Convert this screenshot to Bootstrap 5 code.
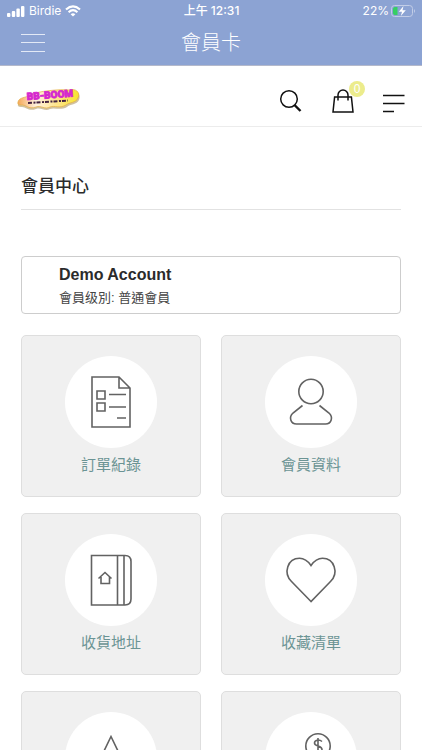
<!DOCTYPE html>
<html lang="zh-Hant">
<head>
<meta charset="utf-8">
<meta name="viewport" content="width=device-width, initial-scale=1">
<title>會員卡</title>
<link href="https://cdn.jsdelivr.net/npm/bootstrap@5.3.0/dist/css/bootstrap.min.css" rel="stylesheet">
<style>
body { font-family: "Liberation Sans", "Noto Sans CJK TC", sans-serif; color: #2b2b2b; }
.app-top { background: #8ca3d3; border-bottom: 1px solid #b4b9cb; }
.status-bar { font: 12px/22px Inter, "Noto Sans CJK TC", sans-serif; padding: 0 6px 0 7px; }
.status-time { font-weight: 500; }
.status-battery { gap: 2px; }
.app-title { font-size: 20px; line-height: 43px; font-weight: 300; }
.title-bar { height: 43px; padding: 0 20px; }
.side { flex: 1 1 0; }
.plain-btn { border: 0; background: none; padding: 0; line-height: 0; color: inherit; }
.scroll-area { scrollbar-width: none; }
.scroll-area::-webkit-scrollbar { display: none; }
.shop-bar { height: 61px; border-bottom: 1px solid #ececec; padding: 10px 17px 0 16px; }
.shop-tools { gap: 29px; color: #111; }
.bag-count { top: -7px; right: -11px; width: 16px; height: 16px; font-size: 12px; line-height: 16px; background: #ecec8c; color: #fff; }
.member { padding: 0 21px; }
.member-title { font-size: 17px; line-height: 24px; font-weight: 500; padding: 46px 0 12px; border-bottom: 1px solid #e2e2e2; margin-bottom: 46px; font-family: "Noto Sans CJK TC", sans-serif; }
.profile { border: 1px solid #cdcdcd; border-radius: 4px; padding: 6px 37px 5px; margin-bottom: 21px; }
.profile-name { font-size: 16px; line-height: 24px; }
.profile-level { font-size: 13px; line-height: 21px; color: #444; }
.tiles { --bs-gutter-x: 20px; --bs-gutter-y: 16px; }
.tile { background: #f0f0f0; border: 1px solid #dedede; border-radius: 5px; padding: 20px 0 14px; color: #6b9494; font-size: 15px; line-height: 34px; }
.tile-icon { width: 92px; height: 92px; }
.tile-icon svg { display: block; }
</style>
</head>
<body class="bg-white">
<div class="d-flex flex-column vh-100">
  <header class="app-top text-white flex-shrink-0">
    <div class="status-bar d-flex align-items-center">
      <div class="side d-flex align-items-center gap-1">
        <svg width="18" height="11" viewBox="0 0 18 11" fill="#fff" aria-hidden="true"><rect y="7" width="3.4" height="4" rx="1"/><rect x="4.8" y="5" width="3.4" height="6" rx="1"/><rect x="9.4" y="2.5" width="3.4" height="8.5" rx="1"/><rect x="14" width="3.4" height="11" rx="1"/></svg>
        <span>Birdie</span>
        <svg width="16" height="12" viewBox="0 0 16 12" fill="none" stroke="#fff" stroke-width="2.2" aria-hidden="true"><path d="M1 4.500Q8-1.700 15 4.500M3.600 7.200Q8 3.200 12.400 7.200"/><path d="M8 11.600 5.600 9.200Q8 7.300 10.400 9.200Z" fill="#fff" stroke="none"/></svg>
      </div>
      <div class="status-time">上午 12:31</div>
      <div class="side status-battery d-flex align-items-center justify-content-end">
        <span>22%</span>
        <svg width="25" height="12" viewBox="0 0 25 12" aria-hidden="true"><rect x=".5" y=".5" width="21" height="11" rx="3" fill="none" stroke="#c2cde7"/><path d="M4 2H6.500V10H4Q2 10 2 8V4Q2 2 4 2Z" fill="#35cf62"/><path d="M12.500 1 7.800 6.700H11L9.800 11 14.800 5.200H11.500Z" fill="#fff"/><path d="M23 4Q25 6 23 8Z" fill="#c2cde7"/></svg>
      </div>
    </div>
    <div class="title-bar d-flex align-items-start">
      <div class="side d-flex pt-2"><button class="plain-btn pt-1" type="button" aria-label="選單"><svg width="26" height="20" viewBox="0 0 26 20" stroke="#e3e9f6"><path d="M1 .5H25M1 8.500H25M1 17.500H25"/></svg></button></div>
      <h1 class="app-title m-0">會員卡</h1>
      <div class="side"></div>
    </div>
  </header>
  <div class="scroll-area flex-grow-1 overflow-auto">
    <nav class="shop-bar d-flex align-items-center justify-content-between">
      <a href="#" class="lh-1 pb-2" aria-label="BB-BOOM">
        <svg width="66" height="30" viewBox="0 0 66 30">
          <defs><linearGradient id="cloud" x1="0" x2="1"><stop offset="0" stop-color="#f4a85a"/><stop offset=".3" stop-color="#fff2df"/><stop offset=".65" stop-color="#ffe58a"/><stop offset="1" stop-color="#f8e52d"/></linearGradient></defs>
          <path d="M2 22C3 17 10 17 14 14C22 10 44 8 53 9C59 7 66 12 63 18C61 23 54 22 51 25C44 29 39 25 34 27C29 30 25 25 20 27C12 30 10 24 5 25Q1 25 2 22Z" fill="#b39a62" opacity=".6"/>
          <path d="M2 20C3 15 10 16 14 13C22 9 44 7 53 8C59 6 65 10 62 16C60 21 54 20 50 23C43 27 39 23 34 25C29 28 25 23 20 25C12 28 10 22 5 23Q1 23 2 20Z" fill="url(#cloud)" stroke="#e4ae40" stroke-width=".7"/>
          <path d="M12 21 52 18.500" stroke="#43213f" stroke-width="2" stroke-dasharray="4 1.500 2 1"/>
          <text x="11" y="18" transform="rotate(-4 11 18)" font-family="Roboto, sans-serif" font-weight="900" font-size="10" fill="#d527cf" stroke="#d527cf" stroke-width=".8">BB-BOOM</text>
        </svg>
      </a>
      <div class="shop-tools d-flex align-items-center">
        <button class="plain-btn" type="button" aria-label="搜尋"><svg width="24" height="26" viewBox="0 0 24 26" fill="none" stroke="currentColor"><circle cx="10" cy="11" r="8.3" stroke-width="1.5"/><path d="M15.500 17 21.500 23" stroke-width="2.4"/></svg></button>
        <button class="plain-btn position-relative" type="button" aria-label="購物袋"><svg width="22" height="26" viewBox="0 0 22 26" fill="none" stroke="currentColor" stroke-width="1.5"><path d="M2.600 9H19.400L21 24H1ZM6 12.500V7A5 5 0 0 1 16 7V12.500"/></svg><span class="bag-count position-absolute rounded-circle text-center">0</span></button>
        <button class="plain-btn pt-1" type="button" aria-label="分類"><svg width="22" height="20" viewBox="0 0 22 20" stroke="currentColor" stroke-width="1.7"><path d="M0 2.500H21.500M0 10.500H21.500M0 18.500H11"/></svg></button>
      </div>
    </nav>
    <main class="member">
      <h2 class="member-title">會員中心</h2>
      <section class="profile">
        <div class="profile-name fw-bold">Demo Account</div>
        <div class="profile-level">會員级別: 普通會員</div>
      </section>
      <div class="row row-cols-2 tiles pb-3">
        <div class="col"><a href="#" class="tile d-flex flex-column align-items-center text-decoration-none">
          <span class="tile-icon rounded-circle bg-white"><svg viewBox="0 0 92 92" fill="none" stroke="#626262" stroke-width="1.6"><path d="M27 21H54L65 32V71H27ZM54 21V32H65M32 35H40V43H32ZM32 47H40V55H32ZM44 38.500H61M44 51H61M52 62H61"/></svg></span>
          <span>訂單紀錄</span></a></div>
        <div class="col"><a href="#" class="tile d-flex flex-column align-items-center text-decoration-none">
          <span class="tile-icon rounded-circle bg-white"><svg viewBox="0 0 92 92" fill="none" stroke="#626262" stroke-width="1.6"><circle cx="46" cy="35.5" r="12.2"/><path d="M37.500 49.500 28 57C23.500 61 25.500 68 31.500 68H60.500C66.500 68 68.500 61 64 57L54.500 49.500"/></svg></span>
          <span>會員資料</span></a></div>
        <div class="col"><a href="#" class="tile d-flex flex-column align-items-center text-decoration-none">
          <span class="tile-icon rounded-circle bg-white"><svg viewBox="0 0 92 92" fill="none" stroke="#626262" stroke-width="1.6"><path d="M26.500 21.500H60Q66 21.500 66 27.500V65Q66 71 60 71H26.500ZM52.500 21.500V71M59 21.500V71M33.500 44.500 40 38.500 46.500 44.500M36 43V49.500H44.500V43"/></svg></span>
          <span>收貨地址</span></a></div>
        <div class="col"><a href="#" class="tile d-flex flex-column align-items-center text-decoration-none">
          <span class="tile-icon rounded-circle bg-white"><svg viewBox="0 0 92 92" fill="none" stroke="#626262" stroke-width="1.6"><path d="M46 67.500 26.500 47.500C18 39 22.500 24.300 34.500 24.300Q41 24.300 46 31.500Q51 24.300 57.500 24.300C69.500 24.300 74 39 65.500 47.500Z"/></svg></span>
          <span>收藏清單</span></a></div>
        <div class="col"><a href="#" class="tile d-flex flex-column align-items-center text-decoration-none" aria-label="通知">
          <span class="tile-icon rounded-circle bg-white"><svg viewBox="0 0 92 92" fill="none" stroke="#626262" stroke-width="1.6"><path d="M46 24.500 66 66H26Z"/></svg></span></a></div>
        <div class="col"><a href="#" class="tile d-flex flex-column align-items-center text-decoration-none" aria-label="購物金">
          <span class="tile-icon rounded-circle bg-white"><svg viewBox="0 0 92 92" fill="none" stroke="#626262" stroke-width="1.6"><circle cx="53" cy="34" r="12.2"/><path d="M57 29.500C54 27 49.500 28 49.500 31C49.500 35 57 33 57 37.500C57 41 51 41 49 38.500M53 26V42.500"/></svg></span></a></div>
      </div>
    </main>
  </div>
</div>
<script src="https://cdn.jsdelivr.net/npm/bootstrap@5.3.0/dist/js/bootstrap.bundle.min.js"></script>
</body>
</html>
